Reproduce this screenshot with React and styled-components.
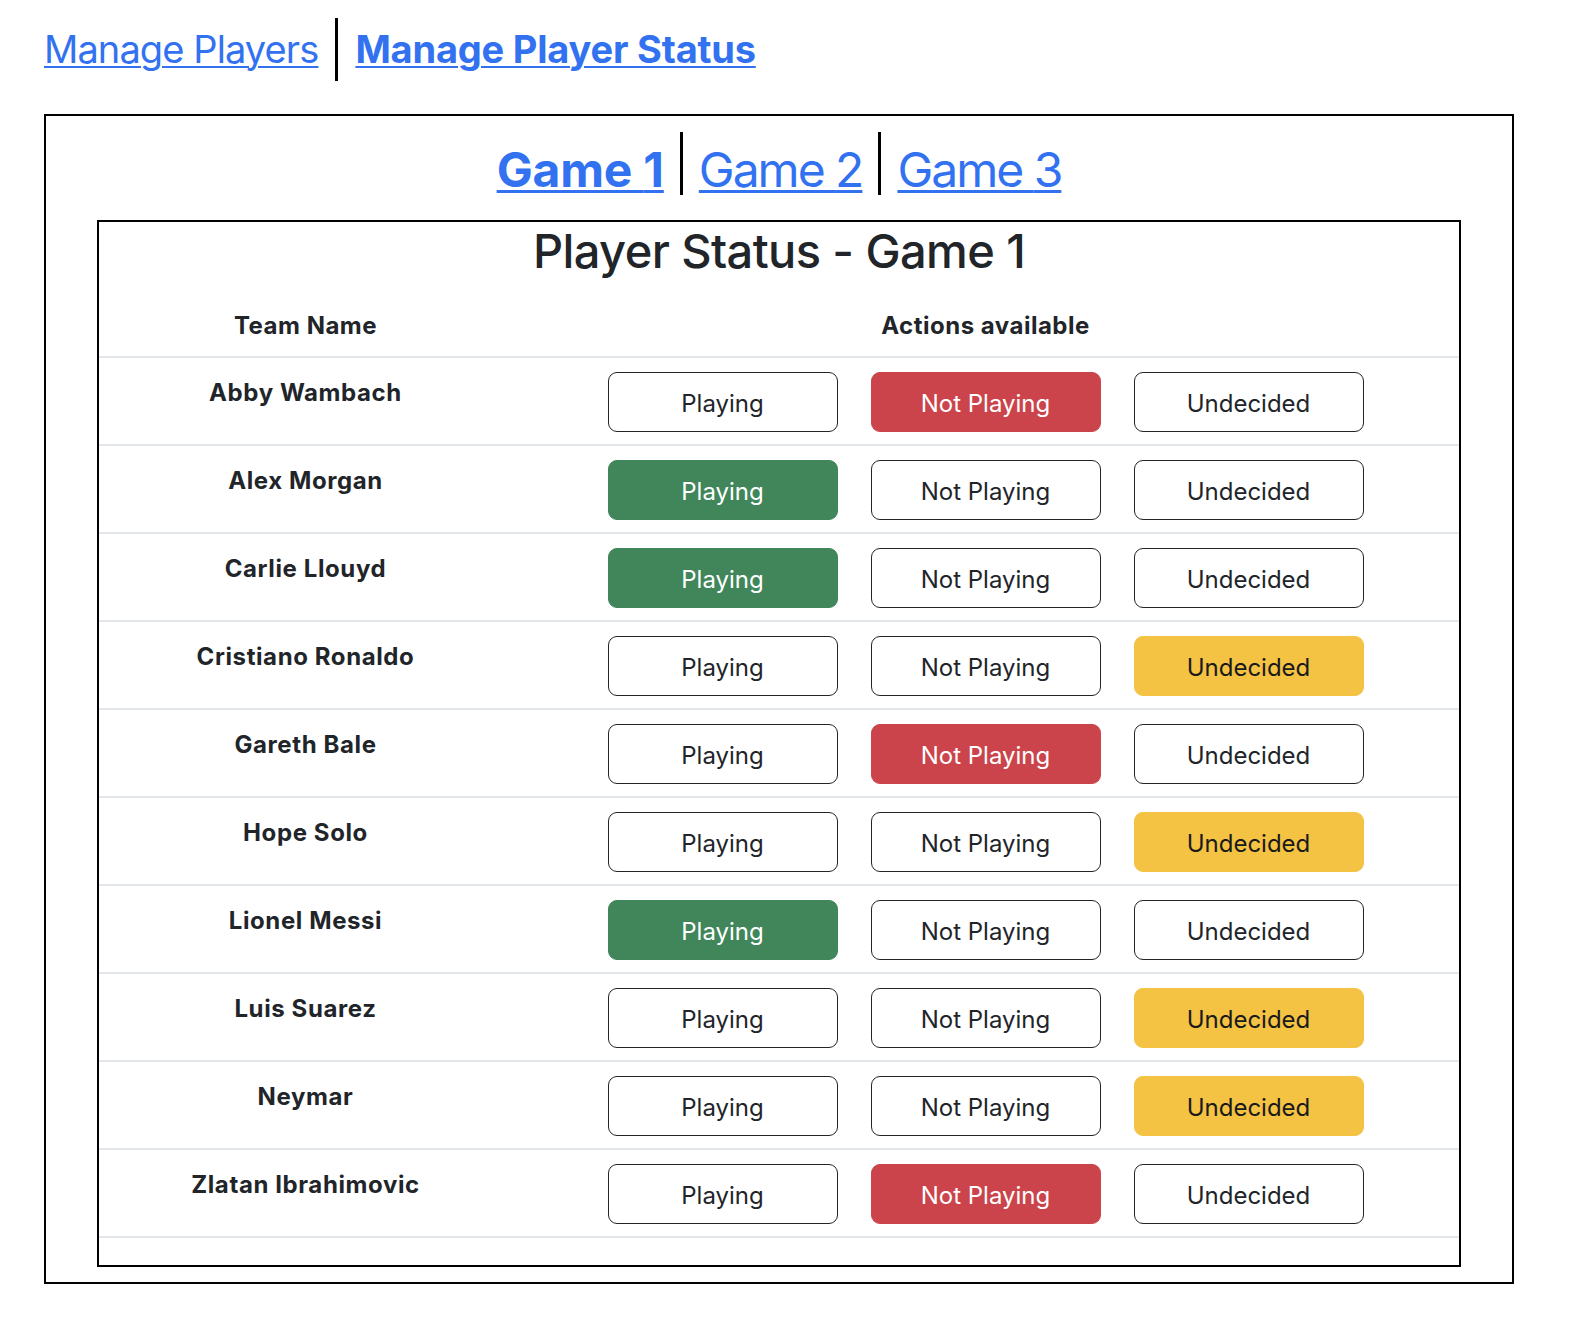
import React, { useState } from "react";
import styled, { createGlobalStyle, css } from "styled-components";

const GlobalStyle = createGlobalStyle`
  body {
    margin: 0;
    font-family: Inter, "Noto Sans", "Liberation Sans", sans-serif;
    color: #212529;
    background: #fff;
  }
`;

const Page = styled.div`
  padding: 18px 0 0 44px;
`;

const NavRow = styled.nav`
  display: flex;
  align-items: ${(p) => (p.$bottom ? "flex-end" : "center")};
  justify-content: ${(p) => (p.$center ? "center" : "flex-start")};
`;

const NavLink = styled.a`
  display: block;
  font-size: ${(p) => p.$size}px;
  line-height: ${(p) => p.$lh}px;
  font-weight: ${(p) => (p.$active ? 700 : 400)};
  letter-spacing: ${(p) => (p.$active ? "-0.2px" : p.$size > 40 ? "-2px" : "-0.9px")};
  color: #3272f1;
  text-decoration: underline;
  text-decoration-thickness: ${(p) => (p.$size > 40 ? 3 : 2)}px;
  text-underline-offset: 3px;
  cursor: pointer;
`;

const Divider = styled.span`
  width: 3px;
  height: 63px;
  background: #000;
  margin: 0 ${(p) => p.$space}px;
  flex-shrink: 0;
`;

const Frame = styled.section`
  box-sizing: border-box;
  width: 1470px;
  margin-top: 33px;
  border: 2px solid #000;
  padding: 16px 51px 15px;
`;

const Panel = styled.div`
  margin-top: 25px;
  border: 2px solid #000;
  padding-bottom: 27px;
`;

const Title = styled.h2`
  margin: 0 0 18px;
  padding-top: 2px;
  text-align: center;
  font-size: 47px;
  line-height: 54px;
  font-weight: 500;
  letter-spacing: -0.6px;
  color: #212529;
`;

const Row = styled.div`
  display: grid;
  grid-template-columns: 413px 1fr;
  border-bottom: 2px solid #e3e6ea;
`;

const HeadCell = styled.div`
  padding: 12px;
  text-align: center;
  font-size: 24px;
  line-height: 36px;
  font-weight: 700;
  letter-spacing: 0.5px;
`;

const NameCell = styled.div`
  padding: 17px 12px 0;
  text-align: center;
  font-size: 24px;
  line-height: 36px;
  font-weight: 700;
  letter-spacing: 0.6px;
`;

const Actions = styled.div`
  display: flex;
  justify-content: center;
  gap: 33px;
  padding: 14px 12px 12px;
`;

const palette = {
  playing: { bg: "#40865a", fg: "#fff" },
  notPlaying: { bg: "#cc444b", fg: "#fff" },
  undecided: { bg: "#f5c343", fg: "#1a1a1a" },
};

const StatusButton = styled.button`
  box-sizing: border-box;
  width: 230px;
  height: 60px;
  padding: 4px 0 0;
  border-radius: 9px;
  font-family: inherit;
  font-size: 24px;
  line-height: 36px;
  cursor: pointer;
  border: 1px solid #212529;
  background: #fff;
  color: #212529;
  ${(p) =>
    p.$active &&
    css`
      background: ${palette[p.$kind].bg};
      border-color: ${palette[p.$kind].bg};
      color: ${palette[p.$kind].fg};
    `}
`;

const players = [
  ["Abby Wambach", "notPlaying"],
  ["Alex Morgan", "playing"],
  ["Carlie Llouyd", "playing"],
  ["Cristiano Ronaldo", "undecided"],
  ["Gareth Bale", "notPlaying"],
  ["Hope Solo", "undecided"],
  ["Lionel Messi", "playing"],
  ["Luis Suarez", "undecided"],
  ["Neymar", "undecided"],
  ["Zlatan Ibrahimovic", "notPlaying"],
];

const options = [
  ["playing", "Playing"],
  ["notPlaying", "Not Playing"],
  ["undecided", "Undecided"],
];

export default function App() {
  const [game, setGame] = useState(1);
  const [status, setStatus] = useState(() =>
    Object.fromEntries(players.map(([name, s]) => [name, s]))
  );

  const games = [1, 2, 3];

  return (
    <Page>
      <GlobalStyle />
      <NavRow>
        <NavLink $size={38} $lh={63}>Manage Players</NavLink>
        <Divider $space={17} />
        <NavLink $size={38} $lh={63} $active>
          Manage Player Status
        </NavLink>
      </NavRow>

      <Frame>
        <NavRow $center $bottom>
          {games.map((g, i) => (
            <React.Fragment key={g}>
              {i > 0 && <Divider $space={16} />}
              <NavLink
                $size={48}
                $lh={50}
                $active={game === g}
                onClick={() => setGame(g)}
              >
                Game {g}
              </NavLink>
            </React.Fragment>
          ))}
        </NavRow>

        <Panel>
          <Title>Player Status - Game {game}</Title>
          <Row>
            <HeadCell>Team Name</HeadCell>
            <HeadCell>Actions available</HeadCell>
          </Row>
          {players.map(([name]) => (
            <Row key={name}>
              <NameCell>{name}</NameCell>
              <Actions>
                {options.map(([kind, label]) => (
                  <StatusButton
                    key={kind}
                    $kind={kind}
                    $active={status[name] === kind}
                    onClick={() => setStatus({ ...status, [name]: kind })}
                  >
                    {label}
                  </StatusButton>
                ))}
              </Actions>
            </Row>
          ))}
        </Panel>
      </Frame>
    </Page>
  );
}
